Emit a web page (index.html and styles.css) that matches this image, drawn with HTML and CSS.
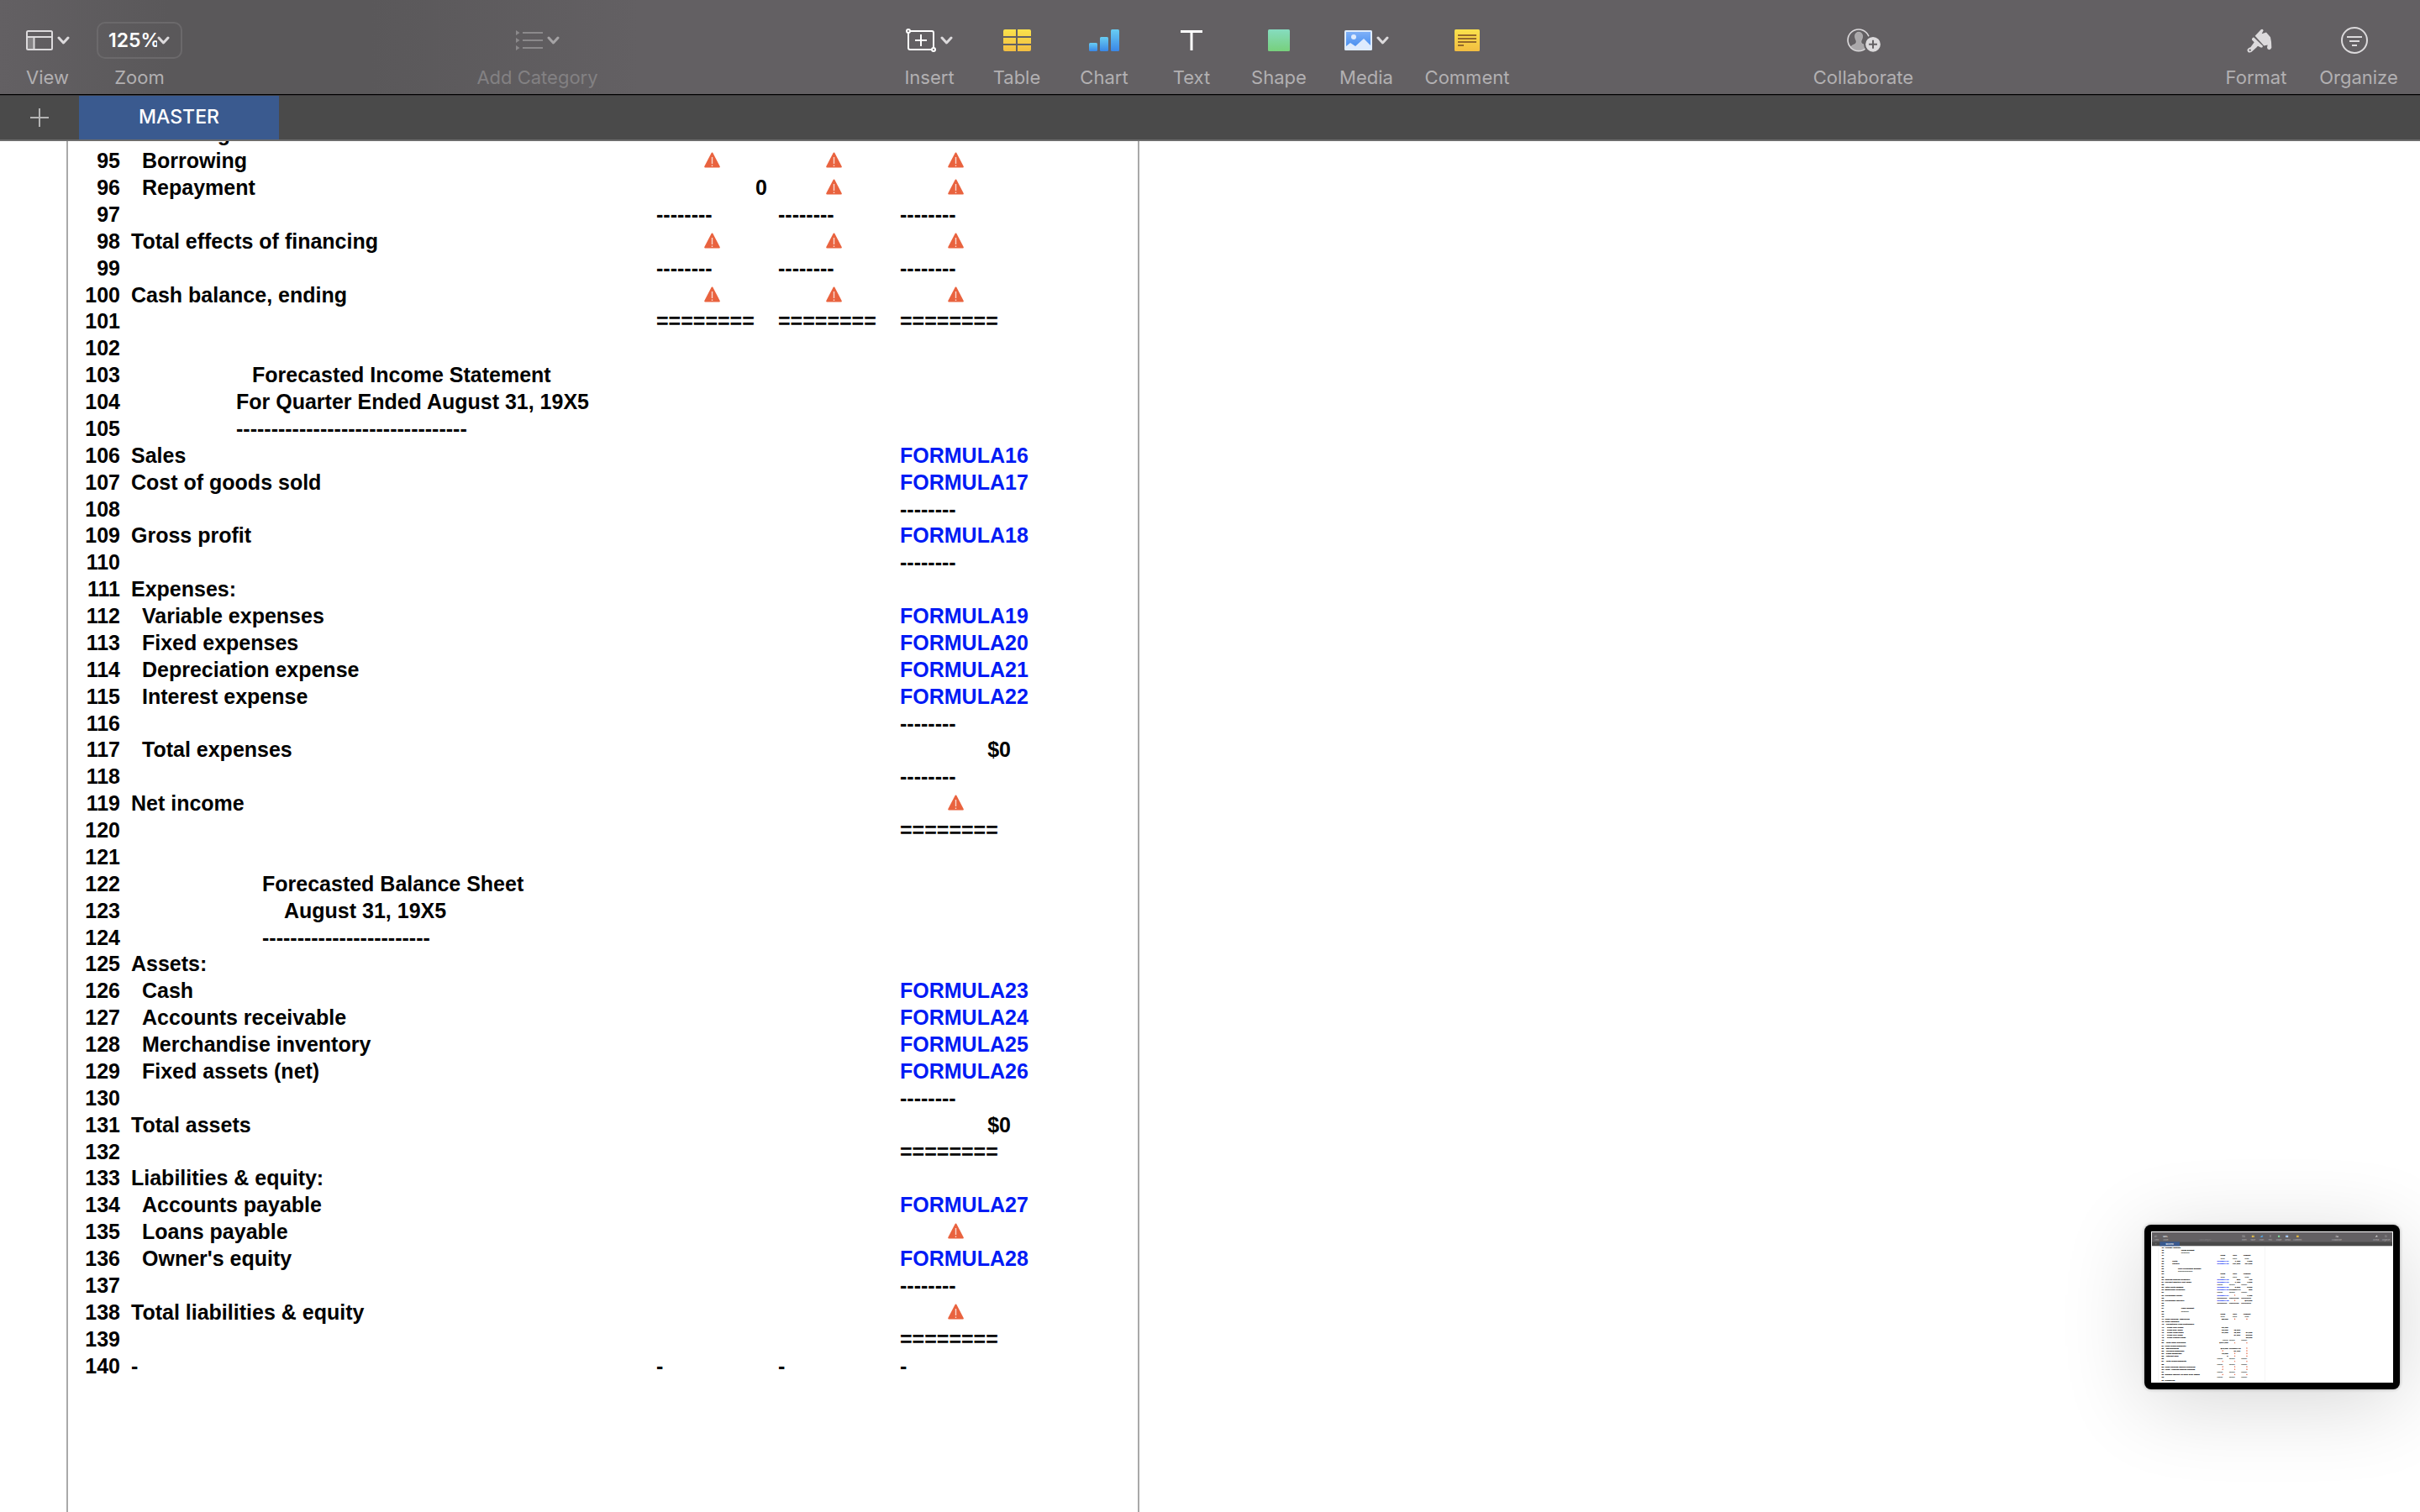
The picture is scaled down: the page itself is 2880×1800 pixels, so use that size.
FILE: index.html
```html
<!DOCTYPE html>
<html lang="en">
<head>
<meta charset="utf-8">
<title>Master budget</title>
<link rel="stylesheet" href="styles.css">
</head>
<body>
<svg class="sprite" aria-hidden="true">
  <defs>
    <linearGradient id="g-yellow" x1="0" y1="0" x2="0" y2="1"><stop offset="0" stop-color="#fae24c"/><stop offset="1" stop-color="#f2bd41"/></linearGradient>
    <linearGradient id="g-blue" x1="0" y1="0" x2="0" y2="1"><stop offset="0" stop-color="#68cdf3"/><stop offset="1" stop-color="#3a87e6"/></linearGradient>
    <linearGradient id="g-green" x1="0" y1="0" x2="0" y2="1"><stop offset="0" stop-color="#86dcc0"/><stop offset="1" stop-color="#77d07c"/></linearGradient>
    <linearGradient id="g-sky" x1="0" y1="0" x2="0" y2="1"><stop offset="0" stop-color="#7eb0f8"/><stop offset="1" stop-color="#4a90f0"/></linearGradient>
    <symbol id="i-chevron" viewBox="0 0 15 10"><path d="M2 2l5.500 6L13 2" fill="none" stroke="currentColor" stroke-width="3" stroke-linecap="round" stroke-linejoin="round"/></symbol>
    <symbol id="i-view" viewBox="0 0 32 24"><path d="M1 8h8v15H1z" fill="#858385"/><rect x="1" y="1" width="30" height="22" rx="1.500" fill="none" stroke="#dcdadc" stroke-width="2"/><path d="M1 8h30M9.500 8v15" stroke="#dcdadc" stroke-width="2"/></symbol>
    <symbol id="i-category" viewBox="0 0 32 24"><path d="M0 0l4.500 3L0 6zM0 9l4.500 3L0 15zM0 18l4.500 3L0 24z" fill="#8b898b"/><path d="M8 3h24M8 12h24M8 21h24" stroke="#8b898b" stroke-width="2"/></symbol>
    <symbol id="i-insert" viewBox="0 0 36 28"><rect x="3" y="3" width="30" height="22" rx="2" fill="none" stroke="#fff" stroke-width="2"/><path d="M11 14h14M18 7v14" stroke="#fff" stroke-width="2"/><circle cx="3" cy="3" r="2" fill="#636063" stroke="#fff" stroke-width="2"/><circle cx="33" cy="25" r="2" fill="#636063" stroke="#fff" stroke-width="2"/></symbol>
    <symbol id="i-table" viewBox="0 0 33 26"><path d="M2 0h13v8H0V2a2 2 0 0 1 2-2zM17 0h14a2 2 0 0 1 2 2v6H17zM0 10h15v7H0zM17 10h16v7H17zM0 19h15v7H2a2 2 0 0 1-2-2zM17 19h16v5a2 2 0 0 1-2 2H17z" fill="url(#g-yellow)"/></symbol>
    <symbol id="i-chart" viewBox="0 0 36 26"><rect x="0" y="16" width="10" height="10" rx="1.500" fill="url(#g-blue)"/><rect x="13" y="9" width="10" height="17" rx="1.500" fill="url(#g-blue)"/><rect x="26" y="0" width="10" height="26" rx="1.500" fill="url(#g-blue)"/></symbol>
    <symbol id="i-text" viewBox="0 0 26 24"><path d="M0 1.500h26M13 1v23" stroke="#fff" stroke-width="3"/></symbol>
    <symbol id="i-shape" viewBox="0 0 26 26"><rect width="26" height="26" rx="1.500" fill="url(#g-green)"/></symbol>
    <symbol id="i-media" viewBox="0 0 33 24"><rect width="33" height="24" rx="1.500" fill="#deebfd"/><path d="M2 2h29v16l-8-8-10 9-6-4-5 4z" fill="url(#g-sky)"/><circle cx="11" cy="8" r="3" fill="#deebfd"/></symbol>
    <symbol id="i-comment" viewBox="0 0 30 26"><rect width="30" height="26" rx="1.500" fill="url(#g-yellow)"/><path d="M4 7h22M4 11h22M4 15h22M4 19h7" stroke="#94692c" stroke-width="1.800"/></symbol>
    <symbol id="i-collaborate" viewBox="0 0 121 85"><circle cx="42" cy="42" r="39" fill="none" stroke="#dcdadc" stroke-width="5"/><path d="M42 13c10 0 15 7 14 17-1 9-5 12-5 18 0 10 15 9 20 17-8 10-18 14-29 14s-22-5-28-13c5-8 20-8 20-18 0-6-4-9-5-18-1-10 4-17 13-17z" fill="#aaa8aa" stroke="#c4c2c4" stroke-width="2"/><circle cx="94" cy="57" r="30" fill="#dcdadc" stroke="#636063" stroke-width="6"/><path d="M79 57h30M94 42v30" stroke="#636063" stroke-width="6"/></symbol>
    <symbol id="i-format" viewBox="0 0 90 86"><path d="M29 26L50 3q6-3 9 3l-6 12 16-5 15 17q4 15 4 38-2 7-9 7-7-1-7-8l2-9-13 3z" fill="#dcdadc"/><path fill-rule="evenodd" d="M20 33q4-4 8 1l29 28q0 6-6 6l-12-6-4 4L20 80q-6 7-15 4-6-6-2-12 3-4 10-6l10-13 3-5-8-8q-1-4 2-7zM11 73a3.500 3.500 0 1 0 .1 0z" fill="#dcdadc"/></symbol>
    <symbol id="i-organize" viewBox="0 0 32 32"><circle cx="16" cy="16" r="15" fill="none" stroke="#dcdadc" stroke-width="2"/><path d="M7 12h18M10 17h12M13 22h6" stroke="#dcdadc" stroke-width="2"/></symbol>
    <symbol id="i-error" viewBox="0 0 19 19"><path d="M9.500 1.500L17.800 17.500H1.200z" fill="#e9633f" stroke="#e9633f" stroke-width="2" stroke-linejoin="round"/><path d="M9.500 6v8M9.500 15.500v1.500" stroke="#fbd9cf" stroke-width="1.400"/></symbol>
  </defs>
</svg>

<header class="toolbar">
  <div class="group group-start">
    <button class="tool tool-view"><span class="tool-icon"><svg width="32" height="24"><use href="#i-view"/></svg><svg class="chev" width="15" height="10"><use href="#i-chevron"/></svg></span><span class="tool-label">View</span></button>
    <div class="tool tool-zoom"><span class="zoom-box"><select id="zoom" class="zoom-select"><option>125%</option></select><svg class="chev" width="15" height="10"><use href="#i-chevron"/></svg></span><label class="tool-label" for="zoom">Zoom</label></div>
  </div>
  <button class="tool tool-category" disabled><span class="tool-icon"><svg width="32" height="24"><use href="#i-category"/></svg><svg class="chev" width="15" height="10"><use href="#i-chevron"/></svg></span><span class="tool-label">Add Category</span></button>
  <div class="group">
    <button class="tool"><span class="tool-icon"><svg width="36" height="28"><use href="#i-insert"/></svg><svg class="chev" width="15" height="10"><use href="#i-chevron"/></svg></span><span class="tool-label">Insert</span></button>
    <button class="tool"><span class="tool-icon"><svg width="33" height="26"><use href="#i-table"/></svg></span><span class="tool-label">Table</span></button>
    <button class="tool"><span class="tool-icon"><svg width="36" height="26"><use href="#i-chart"/></svg></span><span class="tool-label">Chart</span></button>
    <button class="tool"><span class="tool-icon"><svg width="26" height="24"><use href="#i-text"/></svg></span><span class="tool-label">Text</span></button>
    <button class="tool"><span class="tool-icon"><svg width="26" height="26"><use href="#i-shape"/></svg></span><span class="tool-label">Shape</span></button>
    <button class="tool"><span class="tool-icon"><svg width="33" height="24"><use href="#i-media"/></svg><svg class="chev" width="15" height="10"><use href="#i-chevron"/></svg></span><span class="tool-label">Media</span></button>
    <button class="tool tool-comment"><span class="tool-icon"><svg width="30" height="26"><use href="#i-comment"/></svg></span><span class="tool-label">Comment</span></button>
  </div>
  <button class="tool tool-collaborate"><span class="tool-icon"><svg width="40" height="28"><use href="#i-collaborate"/></svg></span><span class="tool-label">Collaborate</span></button>
  <div class="group group-end">
    <button class="tool tool-format"><span class="tool-icon"><svg width="30" height="29"><use href="#i-format"/></svg></span><span class="tool-label">Format</span></button>
    <button class="tool tool-organize"><span class="tool-icon"><svg width="32" height="32"><use href="#i-organize"/></svg></span><span class="tool-label">Organize</span></button>
  </div>
</header>

<nav class="tabs" aria-label="Sheets">
  <button class="tab-add" aria-label="Add sheet"><svg width="24" height="24" viewBox="0 0 24 24"><path d="M1 12h22M12 1v22" stroke="#b4b4b4" stroke-width="2"/></svg></button>
  <button class="tab">MASTER</button>
</nav>

<main class="workspace">
  <div class="sheet">
    <table class="grid grid-scrolled">
      <colgroup><col class="c-num"><col class="c-label"><col class="c-val"><col class="c-val"><col class="c-val"></colgroup>
      <tbody>
      <tr><th scope="row">94</th><td>Financing</td><td></td><td></td><td></td></tr>
      <tr><th scope="row">95</th><td class="in1">Borrowing</td><td><svg class="err"><use href="#i-error"/></svg></td><td><svg class="err"><use href="#i-error"/></svg></td><td><svg class="err"><use href="#i-error"/></svg></td></tr>
      <tr><th scope="row">96</th><td class="in1">Repayment</td><td class="n">0</td><td><svg class="err"><use href="#i-error"/></svg></td><td><svg class="err"><use href="#i-error"/></svg></td></tr>
      <tr><th scope="row">97</th><td></td><td>--------</td><td>--------</td><td>--------</td></tr>
      <tr><th scope="row">98</th><td>Total effects of financing</td><td><svg class="err"><use href="#i-error"/></svg></td><td><svg class="err"><use href="#i-error"/></svg></td><td><svg class="err"><use href="#i-error"/></svg></td></tr>
      <tr><th scope="row">99</th><td></td><td>--------</td><td>--------</td><td>--------</td></tr>
      <tr><th scope="row">100</th><td>Cash balance, ending</td><td><svg class="err"><use href="#i-error"/></svg></td><td><svg class="err"><use href="#i-error"/></svg></td><td><svg class="err"><use href="#i-error"/></svg></td></tr>
      <tr><th scope="row">101</th><td></td><td>========</td><td>========</td><td>========</td></tr>
      <tr><th scope="row">102</th><td></td><td></td><td></td><td></td></tr>
      <tr><th scope="row">103</th><td class="in3">Forecasted Income Statement</td><td></td><td></td><td></td></tr>
      <tr><th scope="row">104</th><td class="in2">For Quarter Ended August 31, 19X5</td><td></td><td></td><td></td></tr>
      <tr><th scope="row">105</th><td class="in2">---------------------------------</td><td></td><td></td><td></td></tr>
      <tr><th scope="row">106</th><td>Sales</td><td></td><td></td><td class="f">FORMULA16</td></tr>
      <tr><th scope="row">107</th><td>Cost of goods sold</td><td></td><td></td><td class="f">FORMULA17</td></tr>
      <tr><th scope="row">108</th><td></td><td></td><td></td><td>--------</td></tr>
      <tr><th scope="row">109</th><td>Gross profit</td><td></td><td></td><td class="f">FORMULA18</td></tr>
      <tr><th scope="row">110</th><td></td><td></td><td></td><td>--------</td></tr>
      <tr><th scope="row">111</th><td>Expenses:</td><td></td><td></td><td></td></tr>
      <tr><th scope="row">112</th><td class="in1">Variable expenses</td><td></td><td></td><td class="f">FORMULA19</td></tr>
      <tr><th scope="row">113</th><td class="in1">Fixed expenses</td><td></td><td></td><td class="f">FORMULA20</td></tr>
      <tr><th scope="row">114</th><td class="in1">Depreciation expense</td><td></td><td></td><td class="f">FORMULA21</td></tr>
      <tr><th scope="row">115</th><td class="in1">Interest expense</td><td></td><td></td><td class="f">FORMULA22</td></tr>
      <tr><th scope="row">116</th><td></td><td></td><td></td><td>--------</td></tr>
      <tr><th scope="row">117</th><td class="in1">Total expenses</td><td></td><td></td><td class="n">$0</td></tr>
      <tr><th scope="row">118</th><td></td><td></td><td></td><td>--------</td></tr>
      <tr><th scope="row">119</th><td>Net income</td><td></td><td></td><td><svg class="err"><use href="#i-error"/></svg></td></tr>
      <tr><th scope="row">120</th><td></td><td></td><td></td><td>========</td></tr>
      <tr><th scope="row">121</th><td></td><td></td><td></td><td></td></tr>
      <tr><th scope="row">122</th><td class="in4">Forecasted Balance Sheet</td><td></td><td></td><td></td></tr>
      <tr><th scope="row">123</th><td class="in5">August 31, 19X5</td><td></td><td></td><td></td></tr>
      <tr><th scope="row">124</th><td class="in4">------------------------</td><td></td><td></td><td></td></tr>
      <tr><th scope="row">125</th><td>Assets:</td><td></td><td></td><td></td></tr>
      <tr><th scope="row">126</th><td class="in1">Cash</td><td></td><td></td><td class="f">FORMULA23</td></tr>
      <tr><th scope="row">127</th><td class="in1">Accounts receivable</td><td></td><td></td><td class="f">FORMULA24</td></tr>
      <tr><th scope="row">128</th><td class="in1">Merchandise inventory</td><td></td><td></td><td class="f">FORMULA25</td></tr>
      <tr><th scope="row">129</th><td class="in1">Fixed assets (net)</td><td></td><td></td><td class="f">FORMULA26</td></tr>
      <tr><th scope="row">130</th><td></td><td></td><td></td><td>--------</td></tr>
      <tr><th scope="row">131</th><td>Total assets</td><td></td><td></td><td class="n">$0</td></tr>
      <tr><th scope="row">132</th><td></td><td></td><td></td><td>========</td></tr>
      <tr><th scope="row">133</th><td>Liabilities &amp; equity:</td><td></td><td></td><td></td></tr>
      <tr><th scope="row">134</th><td class="in1">Accounts payable</td><td></td><td></td><td class="f">FORMULA27</td></tr>
      <tr><th scope="row">135</th><td class="in1">Loans payable</td><td></td><td></td><td><svg class="err"><use href="#i-error"/></svg></td></tr>
      <tr><th scope="row">136</th><td class="in1">Owner's equity</td><td></td><td></td><td class="f">FORMULA28</td></tr>
      <tr><th scope="row">137</th><td></td><td></td><td></td><td>--------</td></tr>
      <tr><th scope="row">138</th><td>Total liabilities &amp; equity</td><td></td><td></td><td><svg class="err"><use href="#i-error"/></svg></td></tr>
      <tr><th scope="row">139</th><td></td><td></td><td></td><td>========</td></tr>
      <tr><th scope="row">140</th><td>-</td><td>-</td><td>-</td><td>-</td></tr>
      </tbody>
    </table>
  </div>
</main>

<aside class="preview" aria-label="Preview of the previous screen">
  <svg class="preview-screen" viewBox="0 0 2880 1800" preserveAspectRatio="none">
    <rect width="2880" height="112" fill="#636063"/>
    <rect y="112" width="2880" height="54" fill="#4a4a4a"/>
    <rect x="94" y="114" width="238" height="54" fill="#3a5a8f"/>
    <g class="pv-label">
      <text x="55" y="100">View</text><text x="166" y="100">Zoom</text><text x="639" y="100" opacity=".4">Add Category</text>
      <text x="1106" y="100">Insert</text><text x="1210" y="100">Table</text><text x="1314" y="100">Chart</text><text x="1418" y="100">Text</text><text x="1522" y="100">Shape</text><text x="1626" y="100">Media</text><text x="1745" y="100">Comment</text>
      <text x="2215" y="100">Collaborate</text><text x="2686" y="100">Format</text><text x="2807" y="100">Organize</text>
    </g>
    <g class="pv-label pv-strong"><text x="160" y="56">125%</text><text x="213" y="148">MASTER</text></g>
    <use href="#i-view" x="32" y="36" width="32" height="24"/>
    <use href="#i-insert" x="1080" y="34" width="36" height="28"/>
    <use href="#i-table" x="1194" y="35" width="33" height="26"/>
    <use href="#i-chart" x="1296" y="35" width="36" height="26"/>
    <use href="#i-text" x="1406" y="36" width="26" height="24"/>
    <use href="#i-shape" x="1509" y="35" width="26" height="26"/>
    <use href="#i-media" x="1602" y="36" width="33" height="24"/>
    <use href="#i-comment" x="1730" y="35" width="30" height="26"/>
    <use href="#i-collaborate" x="2195" y="34" width="40" height="28"/>
    <use href="#i-format" x="2675" y="34" width="30" height="29"/>
    <use href="#i-organize" x="2786" y="32" width="32" height="32"/>
    <path d="M36 139h22M47 128v22" stroke="#b4b4b4" stroke-width="2"/>
    <foreignObject x="0" y="166" width="2880" height="1634">
      <div class="workspace">
        <div class="sheet">
          <table class="grid">
            <colgroup><col class="c-num"><col class="c-label"><col class="c-val"><col class="c-val"><col class="c-val"></colgroup>
            <tbody>
            <tr><th>44</th><td>Answer Section</td><td></td><td></td><td></td></tr>
            <tr><th>45</th><td class="in6">Sales Budget</td><td></td><td></td><td></td></tr>
            <tr><th>46</th><td class="in6">------------</td><td></td><td></td><td></td></tr>
            <tr><th>47</th><td></td><td class="c">June</td><td class="c">July</td><td class="c">August</td></tr>
            <tr><th>48</th><td></td><td class="c">------</td><td class="c">------</td><td class="c">------</td></tr>
            <tr><th>49</th><td class="in7">Units</td><td class="f">FORMULA1</td><td class="n">1,400</td><td class="n">1,500</td></tr>
            <tr><th>50</th><td class="in7">Dollars</td><td class="f">FORMULA2</td><td class="n">107,000</td><td class="n">107,000</td></tr>
            <tr><th>51</th><td></td><td></td><td></td><td></td></tr>
            <tr><th>52</th><td class="in4">Unit Purchases Budget</td><td></td><td></td><td></td></tr>
            <tr><th>53</th><td class="in4">---------------------</td><td></td><td></td><td></td></tr>
            <tr><th>54</th><td></td><td class="c">June</td><td class="c">July</td><td class="c">August</td></tr>
            <tr><th>55</th><td></td><td class="c">------</td><td class="c">------</td><td class="c">------</td></tr>
            <tr><th>56</th><td>Desired ending inventory</td><td class="f">FORMULA3</td><td class="n">800</td><td class="n">700</td></tr>
            <tr><th>57</th><td>Current month's unit sales</td><td class="f">FORMULA4</td><td class="n">1,400</td><td class="n">1,500</td></tr>
            <tr><th>58</th><td></td><td>--------</td><td>--------</td><td>--------</td></tr>
            <tr><th>59</th><td>Total units needed</td><td class="f">FORMULA5</td><td class="n">2,200</td><td class="n">2,200</td></tr>
            <tr><th>60</th><td>Beginning inventory</td><td class="f">FORMULA6</td><td>FORMULA7</td><td class="n">800</td></tr>
            <tr><th>61</th><td></td><td>--------</td><td>--------</td><td>--------</td></tr>
            <tr><th>62</th><td>Purchases (units)</td><td class="f">FORMULA7</td><td><svg class="err"><use href="#i-error"/></svg></td><td class="n">1,400</td></tr>
            <tr><th>63</th><td></td><td>========</td><td>========</td><td>========</td></tr>
            <tr><th>64</th><td>Purchases (dollars)</td><td class="f">FORMULA8</td><td><svg class="err"><use href="#i-error"/></svg></td><td class="n">$70,000</td></tr>
            <tr><th>65</th><td></td><td>========</td><td>========</td><td>========</td></tr>
            <tr><th>66</th><td></td><td></td><td></td><td></td></tr>
            <tr><th>67</th><td class="in6">Cash Budget</td><td></td><td></td><td></td></tr>
            <tr><th>68</th><td class="in6">-----------</td><td></td><td></td><td></td></tr>
            <tr><th>69</th><td></td><td class="c">June</td><td class="c">July</td><td class="c">August</td></tr>
            <tr><th>70</th><td></td><td class="c">------</td><td class="c">------</td><td class="c">------</td></tr>
            <tr><th>71</th><td>Cash balance, beginning</td><td class="n">$8,000</td><td><svg class="err"><use href="#i-error"/></svg></td><td><svg class="err"><use href="#i-error"/></svg></td></tr>
            <tr><th>72</th><td>Cash receipts:</td><td></td><td></td><td></td></tr>
            <tr><th>73</th><td class="in1">Collections from customers:</td><td></td><td></td><td></td></tr>
            <tr><th>74</th><td class="in8">From April sales</td><td class="n">20,400</td><td></td><td></td></tr>
            <tr><th>75</th><td class="in8">From May sales</td><td class="n">36,000</td><td class="n">18,000</td><td></td></tr>
            <tr><th>76</th><td class="in8">From June sales</td><td class="n">31,000</td><td class="n">45,000</td><td class="n">21,000</td></tr>
            <tr><th>77</th><td class="in8">From July sales</td><td></td><td class="n">37,000</td><td class="n">53,500</td></tr>
            <tr><th>78</th><td class="in8">From August sales</td><td></td><td></td><td class="n">35,000</td></tr>
            <tr><th>79</th><td></td><td class="n">--------</td><td>--------</td><td>--------</td></tr>
            <tr><th>80</th><td class="in1">Total cash available</td><td class="n">$107,000</td><td><svg class="err"><use href="#i-error"/></svg></td><td><svg class="err"><use href="#i-error"/></svg></td></tr>
            <tr><th>81</th><td>Cash disbursements:</td><td></td><td></td><td></td></tr>
            <tr><th>82</th><td class="in1">Merchandise</td><td class="n">$70,000</td><td>FORMULA9</td><td><svg class="err"><use href="#i-error"/></svg></td></tr>
            <tr><th>83</th><td class="in1">Variable expenses</td><td><svg class="err"><use href="#i-error"/></svg></td><td class="n">21,100</td><td><svg class="err"><use href="#i-error"/></svg></td></tr>
            <tr><th>84</th><td class="in1">Fixed expenses</td><td class="n">10,000</td><td><svg class="err"><use href="#i-error"/></svg></td><td><svg class="err"><use href="#i-error"/></svg></td></tr>
            <tr><th>85</th><td class="in1">Interest paid</td><td class="n">0</td><td><svg class="err"><use href="#i-error"/></svg></td><td><svg class="err"><use href="#i-error"/></svg></td></tr>
            <tr><th>86</th><td></td><td>--------</td><td>--------</td><td>--------</td></tr>
            <tr><th>87</th><td class="in1">Total disbursements</td><td><svg class="err"><use href="#i-error"/></svg></td><td><svg class="err"><use href="#i-error"/></svg></td><td><svg class="err"><use href="#i-error"/></svg></td></tr>
            <tr><th>88</th><td></td><td>--------</td><td>--------</td><td>--------</td></tr>
            <tr><th>89</th><td>Cash balance before financing</td><td><svg class="err"><use href="#i-error"/></svg></td><td><svg class="err"><use href="#i-error"/></svg></td><td><svg class="err"><use href="#i-error"/></svg></td></tr>
            <tr><th>90</th><td>Less:  Desired ending balance</td><td><svg class="err"><use href="#i-error"/></svg></td><td><svg class="err"><use href="#i-error"/></svg></td><td><svg class="err"><use href="#i-error"/></svg></td></tr>
            <tr><th>91</th><td></td><td>--------</td><td>--------</td><td>--------</td></tr>
            <tr><th>92</th><td>Excess (deficit) of cash over needs</td><td><svg class="err"><use href="#i-error"/></svg></td><td><svg class="err"><use href="#i-error"/></svg></td><td><svg class="err"><use href="#i-error"/></svg></td></tr>
            <tr><th>93</th><td></td><td>--------</td><td>--------</td><td>--------</td></tr>
            <tr><th>94</th><td>Financing</td><td></td><td></td><td></td></tr>
            </tbody>
          </table>
        </div>
      </div>
    </foreignObject>
  </svg>
</aside>
</body>
</html>
```
FILE: styles.css
```css
* { box-sizing: border-box; }

body {
  margin: 0;
  min-height: 100vh;
  display: flex;
  flex-direction: column;
  background: #fff;
  color: #000;
  font-family: Inter, "Liberation Sans", sans-serif;
}

button, select {
  font: inherit;
  color: inherit;
  background: none;
  border: 0;
  padding: 0;
  margin: 0;
}

.sprite { position: absolute; width: 0; height: 0; }

/* Toolbar */
.toolbar {
  display: flex;
  justify-content: space-between;
  height: 113px;
  padding: 26px 23px 0 22px;
  background: linear-gradient(90deg, #636063 0, #5a585a 200px, #5a585a 440px, #636063 760px);
  border-bottom: 1px solid #000;
  color: #b2b0b2;
}
.group { display: flex; }
.group-start { gap: 27px; padding-right: 8px; }
.group-end { gap: 22px; padding-left: 14px; }
.tool {
  display: flex;
  flex-direction: column;
  align-items: center;
  justify-content: flex-start;
  gap: 8px;
  width: 104px;
  font-size: 22px;
  line-height: 28px;
  white-space: nowrap;
}
.group-end .tool { width: 100px; }
.tool-view { width: 66px; align-items: flex-start; padding-left: 9px; }
.tool-zoom { width: 102px; }
.tool-category { width: 146px; color: #838183; }
.tool.tool-comment { width: 136px; }
.tool-collaborate { width: 124px; }
.tool-icon { display: flex; align-items: center; gap: 5px; height: 44px; }
.tool-format .tool-icon { padding-left: 8px; }
.tool-organize .tool-icon { padding-right: 10px; }
.chev { color: #dcdadc; flex: none; }
.tool-category .chev { color: #a5a3a5; }
.zoom-box {
  display: flex;
  align-items: center;
  width: 102px;
  height: 44px;
  padding-left: 12px;
  border: 2px solid #6b696b;
  border-radius: 10px;
}
.zoom-select {
  appearance: none;
  width: 58px;
  font-size: 23px;
  font-weight: 600;
  color: #fff;
}

/* Sheet tabs */
.tabs {
  display: flex;
  height: 55px;
  background: #4a4a4a;
  border-top: 1px solid #383638;
  border-bottom: 2px solid #6c6c6c;
}
.tab-add { display: grid; place-items: center; width: 94px; }
.tab {
  width: 238px;
  padding-bottom: 2px;
  background: #3a5a8f;
  color: #fff;
  font-size: 23px;
  font-weight: 500;
}

/* Spreadsheet */
.workspace {
  flex: 1;
  display: flex;
  align-items: stretch;
  overflow: hidden;
  background: #fff;
}
.sheet {
  width: 1277px;
  flex: none;
  margin-left: 79px;
  border: solid #a9a9a9;
  border-width: 0 2px;
}
.grid {
  width: 1129px;
  table-layout: fixed;
  border-collapse: collapse;
  font: bold 25px/32px "Liberation Sans", sans-serif;
  white-space: pre;
}
.grid-scrolled { margin-top: -25px; }
.c-num { width: 69px; }
.c-label { width: 625px; }
.c-val { width: 145px; }
.grid th, .grid td { height: 32px; padding: 0 6px; vertical-align: middle; text-align: left; }
.grid tr:nth-child(8n) > * { height: 31px; line-height: 31px; }
.grid th { padding: 0 7px 0 0; text-align: right; }
.grid .n { padding-right: 7px; text-align: right; }
.grid .c { text-align: center; }
.grid .f { color: #001bf5; }
.grid .in1 { padding-left: 19px; }
.grid .in8 { padding-left: 31px; }
.grid .in7 { padding-left: 93px; }
.grid .in2 { padding-left: 131px; }
.grid .in3 { padding-left: 150px; }
.grid .in4 { padding-left: 162px; }
.grid .in5 { padding-left: 188px; }
.grid .in6 { padding-left: 199px; }
.err { display: block; width: 19px; height: 19px; margin: 0 auto 2px; }

/* Floating preview */
.preview {
  position: fixed;
  right: 24px;
  bottom: 146px;
  width: 304px;
  height: 196px;
  padding: 8px;
  background: #000;
  border-radius: 8px;
  box-shadow: 0 16px 100px rgba(0, 0, 0, .16), 0 0 4px rgba(0, 0, 0, .3);
}
.preview-screen {
  display: block;
  width: 288px;
  height: 180px;
  border: 1px solid #fff;
  background: #fff;
}
.preview-screen .workspace { height: 1634px; }
.preview-screen .sheet { border-color: #ccc; }
.preview-screen .grid { -webkit-text-stroke: 1px currentColor; }
.pv-label { font-size: 22px; fill: #b2b0b2; text-anchor: middle; }
.pv-strong { font-weight: 600; fill: #fff; }
```
